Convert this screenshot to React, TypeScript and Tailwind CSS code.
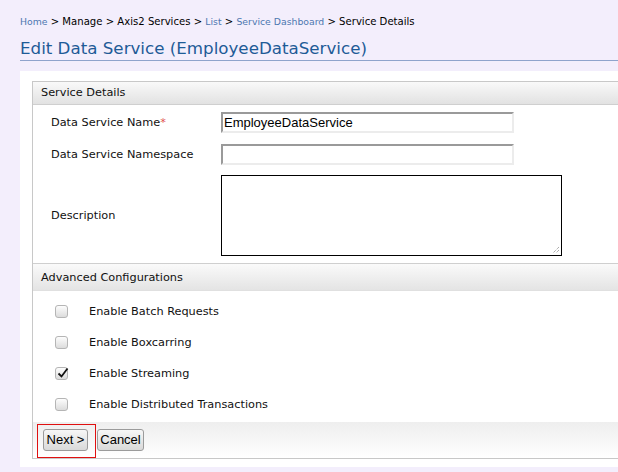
import React from "react";

const font = { fontFamily: '"DejaVu Sans", Verdana, sans-serif' };
const arial = { fontFamily: '"Liberation Sans", Arial, sans-serif' };

function Checkbox({ checked }: { checked?: boolean }) {
  return (
    <div className="relative w-[13px] h-[13px] rounded-[3px] border border-[#b5b5b5] bg-gradient-to-b from-[#fdfdfd] to-[#dcdcdc]">
      {checked && (
        <svg className="absolute left-[1px] top-[-1px]" width="12" height="12" viewBox="0 0 12 12">
          <path d="M1.5 6.5 L4.5 9.5 L10.5 1.5" fill="none" stroke="#111" strokeWidth="1.8" />
        </svg>
      )}
    </div>
  );
}

export default function App() {
  const checks = [
    { label: "Enable Batch Requests", checked: false },
    { label: "Enable Boxcarring", checked: false },
    { label: "Enable Streaming", checked: true },
    { label: "Enable Distributed Transactions", checked: false },
  ];
  return (
    <div className="w-[618px] h-[472px] overflow-hidden bg-[#f3eefc] text-[#111]" style={font}>
      <div className="pl-[20px] pt-[15px] h-[28px] text-[9.3px] leading-[14px] whitespace-nowrap">
        <span className="text-[#4d77b0]">Home</span>
        <span className="text-[10.1px] text-black"> &gt; Manage &gt; Axis2 Services &gt; </span>
        <span className="text-[#4d77b0]">List</span>
        <span className="text-[10.1px] text-black"> &gt; </span>
        <span className="text-[#4d77b0]">Service Dashboard</span>
        <span className="text-[10.1px] text-black"> &gt; Service Details</span>
      </div>
      <div className="ml-[20px] mt-[10px] pb-[2px] border-b border-[#8fa3cc] text-[16.7px] leading-[20px] text-[#1e5b97] whitespace-nowrap">
        Edit Data Service (EmployeeDataService)
      </div>
      <div className="ml-[20px] mt-[10px] w-[700px] h-[396px] bg-white pt-[10px] pl-[12px]">
        <div className="w-[700px] border border-[#c8c8c8] text-[11.3px]">
          <div className="h-[23px] bg-gradient-to-b from-[#f9f9f9] to-[#e2e2e2] border-b border-[#cfcfcf] pl-[8px] leading-[22px]">
            Service Details
          </div>
          <div className="pt-[7px] pb-[8px]">
            <div className="flex items-center h-[21px]">
              <div className="w-[188px] pl-[18px] pt-[2px]">
                Data Service Name<span className="text-[#e0504f]">*</span>
              </div>
              <div className="w-[293px] h-[21px] border-2 border-t-[#9a9a9a] border-l-[#9a9a9a] border-r-[#ececec] border-b-[#ececec] pl-[1px] text-[13px] leading-[17px] text-black" style={arial}>
                EmployeeDataService
              </div>
            </div>
            <div className="flex items-center h-[21px] mt-[11px]">
              <div className="w-[188px] pl-[18px] pt-[2px]">Data Service Namespace</div>
              <div className="w-[293px] h-[21px] border-2 border-t-[#9a9a9a] border-l-[#9a9a9a] border-r-[#ececec] border-b-[#ececec]" />
            </div>
            <div className="flex items-center h-[80px] mt-[10px]">
              <div className="w-[188px] pl-[18px] pt-[2px]">Description</div>
              <div className="relative w-[341px] h-[81px] border border-black">
                <svg className="absolute right-[1px] bottom-[1px]" width="8" height="8" viewBox="0 0 8 8">
                  <path d="M7 1 L1 7 M7 4 L4 7" stroke="#888" strokeWidth="1" strokeDasharray="1 1" />
                </svg>
              </div>
            </div>
          </div>
          <div className="h-[28px] bg-gradient-to-b from-[#fafafa] to-[#e4e4e4] border-t border-[#cfcfcf] border-b border-b-[#e0e0e0] pl-[8px] leading-[27px]">
            Advanced Configurations
          </div>
          <div className="pt-[5px] pb-[2px]">
            {checks.map((c, i) => (
              <div key={i} className="flex items-center h-[31px]">
                <div className="w-[56px] pl-[22px]">
                  <Checkbox checked={c.checked} />
                </div>
                <div className="pt-[2px]">{c.label}</div>
              </div>
            ))}
          </div>
          <div className="h-[36px] bg-gradient-to-b from-[#eeeeee] to-white flex items-start pl-[4px] pt-[2px]">
            <div className="border border-[#e01010] h-[34px] w-[59px] pl-[5px] pt-[4px] shrink-0">
              <button className="h-[22px] w-[45px] rounded-[3px] border border-[#9b9b9b] bg-gradient-to-b from-[#f7f7f7] to-[#d9d9d9] text-[13px] leading-[20px] text-black" style={arial}>
                Next &gt;
              </button>
            </div>
            <button className="ml-[1px] mt-[5px] h-[22px] w-[47px] rounded-[3px] border border-[#9b9b9b] bg-gradient-to-b from-[#f7f7f7] to-[#d9d9d9] text-[13px] leading-[20px] text-black" style={arial}>
              Cancel
            </button>
          </div>
        </div>
      </div>
    </div>
  );
}
